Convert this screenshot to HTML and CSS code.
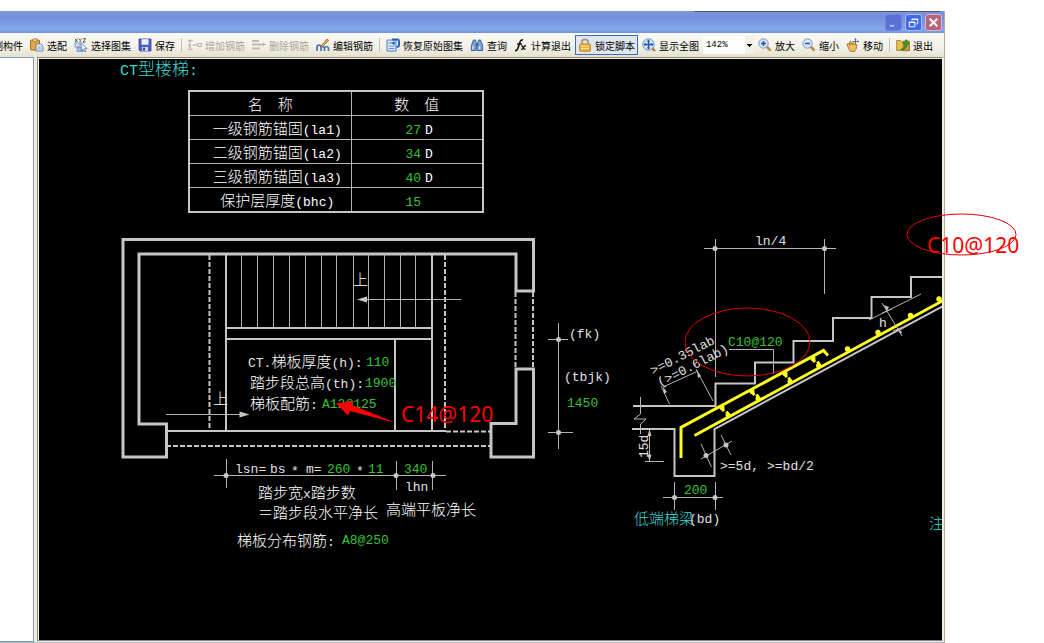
FILE: index.html
```html
<!DOCTYPE html>
<html lang="zh-CN">
<head>
<meta charset="utf-8">
<title>CT型楼梯</title>
<link rel="stylesheet" href="styles.css">
</head>
<body>
<div class="page">
  <div class="window">
    <header class="titlebar">
      <button class="winbtn winbtn-min" type="button" aria-label="最小化"><svg viewBox="0 0 16 16"><path d="M4 11.500h5" stroke="#aabdf5" stroke-width="2"/></svg></button>
      <button class="winbtn winbtn-restore" type="button" aria-label="还原"><svg viewBox="0 0 16 16"><path d="M6.500 6V4.500h6v5H11M6 4.500h7" fill="none" stroke="#fff"/><path d="M3.500 7.500h6v5h-6z M3 8h7" fill="none" stroke="#fff"/></svg></button>
      <button class="winbtn winbtn-close" type="button" aria-label="关闭"><svg viewBox="0 0 16 16"><path d="M4 4l8 8M12 4l-8 8" stroke="#fff" stroke-width="2"/></svg></button>
    </header>

    <nav class="toolbar">
      <button class="tool tool-cut" type="button"><span>制构件</span></button>
      <button class="tool" type="button">
        <svg class="icon" viewBox="0 0 14 14"><rect x=".5" y="2" width="9" height="10" rx="1" fill="#e8a83c" stroke="#a86e1c"/><rect x="3" y=".7" width="4" height="3" rx="1" fill="#e9d9a0" stroke="#7d6a3c" stroke-width=".7"/><path d="M6 6h5l2 2v5H6z" fill="#e9f0fb" stroke="#4a6ea8" stroke-width=".8"/><path d="M7.500 9h4M7.500 11h4" stroke="#6f90c6" stroke-width=".8"/></svg>
        <span>选配</span></button>
      <button class="tool" type="button">
        <svg class="icon" viewBox="0 0 14 14"><path d="M1 .7l2.500 3.500M3.500 .7L1 4.200M5 .7l1.200 1.800L7.500 .7M6.200 2.500v1.700M9 .7h2.500L9 4.200h2.700" stroke="#333" stroke-width=".8" fill="none"/><rect x="1" y="5" width="5" height="4" fill="#cfe0f6" stroke="#5f88bd" stroke-width=".7"/><rect x="3" y="9.500" width="6" height="4" fill="#9dbce6" stroke="#5f88bd" stroke-width=".7"/><path d="M7 4.500l6 6-2.500.2 1.300 2.600-1.300.5-1.300-2.600L7.300 13z" fill="#eaf2fd" stroke="#41689f" stroke-width=".7"/></svg>
        <span>选择图集</span></button>
      <button class="tool" type="button">
        <svg class="icon" viewBox="0 0 14 14"><path d="M1 1h12v12H2l-1-1z" fill="#4c5fc4" stroke="#33429a" stroke-width=".8"/><rect x="3.500" y="1.200" width="7" height="5.500" fill="#eef2ff"/><rect x="4" y="9" width="6" height="4" fill="#cfd6ee"/><rect x="5" y="9.700" width="2" height="3" fill="#33429a"/></svg>
        <span>保存</span></button>
      <i class="sep"></i>
      <button class="tool" type="button" disabled>
        <svg class="icon" viewBox="0 0 14 14"><path d="M0 2.500h5M0 7h3M0 11.500h5M2 2.500v9M5 7h5" fill="none" stroke="#b9b6a8" stroke-width="1.500" stroke-dasharray="2 .7"/><rect x="10" y="5.500" width="3.500" height="3" fill="none" stroke="#b9b6a8"/></svg>
        <span>增加钢筋</span></button>
      <button class="tool" type="button" disabled>
        <svg class="icon" viewBox="0 0 14 14"><path d="M0 3h7M0 6.500h9M0 10.500h7M3 10.500h5" fill="none" stroke="#bfbcae" stroke-width="2"/><path d="M8 6.500h6M11 4.500v4" stroke="#aeab9e"/></svg>
        <span>删除钢筋</span></button>
      <button class="tool" type="button">
        <svg class="icon" viewBox="0 0 14 14"><path d="M1 13V9.500Q1 7 3 7t2 2.500V13M5 10q1.500-3 3.500 0V13M8.500 10q2-3 4 0v3" fill="none" stroke="#3f76b5" stroke-width="1.700"/><path d="M4.500 8.500L11 1l1.800 1.400L6 9z" fill="#e8b054" stroke="#81562a" stroke-width=".7"/></svg>
        <span>编辑钢筋</span></button>
      <i class="sep"></i>
      <button class="tool" type="button">
        <svg class="icon" viewBox="0 0 14 14"><path d="M1 2h9v11H1z" fill="#dce9fb" stroke="#4e7fc4"/><path d="M2.500 5h4M2.500 8h6M2.500 10.500h6" stroke="#5e8ed0"/><path d="M6 1.500h5.500q1.500 0 1.500 2V7q0 2-2.500 2" fill="none" stroke="#2c62b5" stroke-width="2"/><path d="M9 3.500L5 4.500 8.500 7.500z" fill="#2c62b5"/></svg>
        <span>恢复原始图集</span></button>
      <button class="tool" type="button">
        <svg class="icon" viewBox="0 0 14 14"><path d="M3.500 2h2l.8 4v6.500h-5V7.500zM8.500 2h2l2.200 5.500v5h-5V6z" fill="#7fa5d8" stroke="#2c5796" stroke-width=".9"/><path d="M6 6.500h2" stroke="#2c5796" stroke-width="2"/><path d="M2.800 8v3.500M9.300 8v3.500" stroke="#e6f0ff"/></svg>
        <span>查询</span></button>
      <button class="tool" type="button">
        <svg class="icon" viewBox="0 0 14 14"><path d="M1 12.500q2 .5 3-2.500l2-6q.8-2.500 3-2M3 6h5" fill="none" stroke="#1b1b1b" stroke-width="1.700"/><path d="M7 8q1.500-.5 2 1.500t2.500 1.500M12 7.500q-1.500 0-2.500 2t-2.500 2" fill="none" stroke="#1b1b1b" stroke-width="1.300"/></svg>
        <span>计算退出</span></button>
      <button class="tool tool-on" type="button" aria-pressed="true">
        <svg class="icon" viewBox="0 0 14 14"><path d="M4 7V4q0-2.700 3-2.700T10 4v3" fill="none" stroke="#a3967c" stroke-width="1.700"/><rect x="1.500" y="6" width="11" height="7.300" rx="1.500" fill="#f0b13c" stroke="#b5781c" stroke-width=".8"/><path d="M3 8.200h8M3 10.500h8" stroke="#fbe09a"/></svg>
        <span>锁定脚本</span></button>
      <button class="tool" type="button">
        <svg class="icon" viewBox="0 0 14 14"><path d="M9.500 9.500l3.500 3.500" stroke="#b57a3c" stroke-width="2.300"/><circle cx="6.500" cy="6.500" r="5.700" fill="#cfe2f8" stroke="#7593bd"/><path d="M6.500 2.500v8M2.500 6.500h8" stroke="#2452a5" stroke-width="1.300"/><path d="M6.500 1.500l1.700 2H4.800zM6.500 11.500l1.700-2H4.800zM1.500 6.500l2-1.700v3.400zM11.500 6.500l-2-1.700v3.400z" fill="#2452a5"/></svg>
        <span>显示全图</span></button>
      <select class="scale" aria-label="显示比例"><option>142%</option></select>
      <button class="tool" type="button">
        <svg class="icon" viewBox="0 0 14 14"><path d="M8.500 8.500l4 4" stroke="#c08b45" stroke-width="2.500"/><circle cx="5.500" cy="5.500" r="4.700" fill="#d5e6fa" stroke="#7f97bd"/><path d="M5.500 3v5M3 5.500h5" stroke="#2452a5" stroke-width="1.500"/></svg>
        <span>放大</span></button>
      <button class="tool" type="button">
        <svg class="icon" viewBox="0 0 14 14"><path d="M8.500 8.500l4 4" stroke="#c08b45" stroke-width="2.500"/><circle cx="5.500" cy="5.500" r="4.700" fill="#d5e6fa" stroke="#7f97bd"/><path d="M3 5.500h5" stroke="#2452a5" stroke-width="1.500"/></svg>
        <span>缩小</span></button>
      <button class="tool" type="button">
        <svg class="icon" viewBox="0 0 14 14"><path d="M9.500 .5v6M6.500 3.500h6" stroke="#5c6b85"/><path d="M9.500 0l1.300 1.700H8.200zM13.500 3.500l-1.700-1.300v2.600z" fill="#5c6b85"/><path d="M1 6l1.500-.5L4 7.500 3.500 4l1.300-.5L6 6.500l.8-1.800 1.200.4.200 2L10 6l1 .8-1 4.700-1.500 2H4.500L2.500 10.500z" fill="#edbe62" stroke="#94651f" stroke-width=".8"/></svg>
        <span>移动</span></button>
      <i class="sep"></i>
      <button class="tool" type="button">
        <svg class="icon" viewBox="0 0 14 14"><path d="M.7 2.500h4l1 1.500h7.600v8.500H.7z" fill="#eec04c" stroke="#9c7323" stroke-width=".8"/><path d="M7 3h6.300v9.500L7 13z" fill="#d19c34" stroke="#86601a" stroke-width=".6"/><path d="M5 11q4 0 4-5H7l3.300-4.500L13 6h-2q0 5.500-6 6z" fill="#2ea52f" stroke="#176b1c" stroke-width=".6"/></svg>
        <span>退出</span></button>
    </nav>

    <main class="work">
      <aside class="panel"></aside>
      <section class="canvas">
        <svg class="drawing" role="img" aria-label="CT型楼梯平面与剖面">
          <g transform="translate(-39 -59)">
            <text class="title" x="120" y="75"><tspan class="title-latin">CT</tspan>型楼梯<tspan class="title-latin">:</tspan></text>

            <!-- plan: walls -->
            <path class="wall" d="M123 239.500H533.500V291H516V254H139V424H166.500V457H123z"/>
            <path class="wall" d="M516 369H533.500V457H491V423.500H516z"/>
            <path class="dash" d="M515.500 292V368M533 292V368M209.500 255V431M445 255V431M166 446H491M446 431.500H491"/>
            <path class="mid" d="M226 254V431M432 254V431M226 328H432M226 339H432M395 339V431M166 431H446"/>
            <path class="thin" d="M241.500 254V328M257.500 254V328M273.500 254V328M289.500 254V328M305.500 254V328M321.500 254V328M336.500 254V328M353.500 254V328M368.500 254V328M384.500 254V328M400.500 254V328M415.500 254V328"/>
            <path class="thin" d="M461 299.500H360M166 414.500H245"/>
            <path class="solid" d="M357 299.500l10-3v6zM249.500 414.500l-10-3v6z"/>
            <text class="t" x="353" y="285">上</text>
            <text class="t" x="213" y="404">上</text>
            <text class="t" x="248" y="367"><tspan class="m">CT.</tspan>梯板厚度<tspan class="m">(h):</tspan></text>
            <text class="m v" x="366" y="366">110</text>
            <text class="t" x="250" y="388">踏步段总高<tspan class="m">(th):</tspan></text>
            <text class="m v" x="365" y="387">1900</text>
            <text class="t" x="250" y="409">梯板配筋<tspan class="m">:</tspan></text>
            <text class="m v" x="322" y="408">A12@125</text>

            <!-- plan: dimensions -->
            <path class="thin" d="M214 475.500H446M226.500 459V488M396.500 461V490M432.500 461V490M558.500 323V449M548 339.500H568M548 432.500H573"/>
            <g class="solid"><circle cx="226" cy="475.500" r="2.500"/><circle cx="396" cy="475.500" r="2.500"/><circle cx="433" cy="475.500" r="2.500"/><circle cx="558.500" cy="339.500" r="2.500"/><circle cx="558.500" cy="432.500" r="2.500"/></g>
            <text class="m" x="235" y="473">lsn=</text><text class="m" x="270" y="473">bs</text><text class="m" x="291" y="475">*</text><text class="m" x="306" y="473">m=</text>
            <text class="m v" x="327" y="473">260</text><text class="m" x="356" y="475">*</text><text class="m v" x="368" y="473">11</text>
            <text class="m v" x="404" y="473">340</text><text class="m" x="405" y="491">lhn</text>
            <text class="t" x="258" y="498">踏步宽<tspan class="m">x</tspan>踏步数</text>
            <text class="t" x="258" y="518">＝踏步段水平净长</text>
            <text class="t" x="386" y="515">高端平板净长</text>
            <text class="t" x="237" y="546">梯板分布钢筋<tspan class="m">:</tspan></text>
            <text class="m v" x="342" y="544">A8@250</text>
            <text class="m" x="569" y="338">(fk)</text>
            <text class="m" x="564" y="381">(tbjk)</text>
            <text class="m v" x="567" y="407">1450</text>

            <!-- section: concrete outline -->
            <path class="mid" d="M633 406H715.500V383.500H755V362.500H793.500V341H833V318H871.500V297H911V277H944"/>
            <path class="mid" d="M632 429H674.500V476H714.500V429L944 305.500"/>
            <path class="thin" d="M640.500 397V414L634 419H646L640.500 424V434"/>
            <path class="thin" d="M645 461.500H664M655 429.500H664M649.500 430V461"/>
            <path class="solid" d="M649.500 429l-2 7h4zM649.500 461.500l-2-7h4z"/>
            <text class="m" transform="translate(648 458) rotate(-90)">15d</text>

            <!-- section: bars -->
            <path class="bar" d="M681 458V427.500L823.500 350.500L828 355.500M694.500 435.500L944 300"/>
            <path class="bar" d="M719.500 406l4.500 5M750 390l4.500 5M782.500 372l4.500 5M810.500 357l4.500 5M730 417l-3.500-5.500M760 400l-3.500-5.500M792 383l-3.500-5.500M821 367l-3.500-5.500"/>
            <g class="dots"><circle cx="722" cy="407.500" r="2.500"/><circle cx="752" cy="391.500" r="2.500"/><circle cx="785" cy="373.500" r="2.500"/><circle cx="813" cy="358.500" r="2.500"/><circle cx="728" cy="415" r="2.500"/><circle cx="758" cy="398.500" r="2.500"/><circle cx="790" cy="381.500" r="2.500"/><circle cx="818.500" cy="365.500" r="2.500"/><circle cx="847.500" cy="349" r="2.700"/><circle cx="878" cy="332.500" r="2.700"/><circle cx="910.500" cy="315.500" r="2.700"/><circle cx="939" cy="299" r="2.700"/></g>

            <!-- section: dimensions -->
            <path class="thin" d="M704 248.500H836M715.500 239V377M824.500 239V294M729 349.500H773.500V374"/>
            <path class="thin" d="M663 387L698 371M661 386L669.500 404M696 369L713 401"/>
            <path class="thin" d="M869 320L921 294M882 303L902 336M882 313l10-4M893 331l10-4"/>
            <path class="thin" d="M701 459L732 441M701 444L711.500 467M721 435L731 455M663 497.500H723M674.500 482V510M715.500 482V510"/>
            <path class="solid" d="M663 387l1 7 3-2zM697 371l1 7 3-2zM887 311l-3-6 5 2zM897 328l5 4-1 2z"/>
            <g class="solid"><circle cx="715" cy="248.500" r="2.500"/><circle cx="824.500" cy="248.500" r="2.500"/><circle cx="706" cy="455.500" r="2.500"/><circle cx="726" cy="445" r="2.500"/><circle cx="674.500" cy="497.500" r="2.500"/><circle cx="715" cy="497.500" r="2.500"/></g>
            <text class="m" x="755" y="245">ln/4</text>
            <text class="m v" x="728" y="346">C10@120</text>
            <text class="m" transform="translate(653 375) rotate(-27)">&gt;=0.35lab</text>
            <text class="m" transform="translate(660 387) rotate(-27)">(&gt;=0.6lab)</text>
            <text class="m" x="879" y="327">h</text>
            <text class="m" x="720" y="470">&gt;=5d,</text><text class="m" x="767" y="470">&gt;=bd/2</text>
            <text class="m v" x="684" y="494">200</text>
            <text class="t note" x="634" y="524">低端梯梁</text><text class="m" x="689" y="523">(bd)</text>
            <text class="t note" x="929" y="529">注</text>
          </g>
        </svg>

        <table class="params">
          <thead><tr><th>名　称</th><th>数　值</th></tr></thead>
          <tbody>
            <tr><td>一级钢筋锚固<span class="m">(la1)</span></td><td><span class="m v">27</span><span class="m unit">D</span></td></tr>
            <tr><td>二级钢筋锚固<span class="m">(la2)</span></td><td><span class="m v">34</span><span class="m unit">D</span></td></tr>
            <tr><td>三级钢筋锚固<span class="m">(la3)</span></td><td><span class="m v">40</span><span class="m unit">D</span></td></tr>
            <tr><td>保护层厚度<span class="m">(bhc)</span></td><td><span class="m v">15</span></td></tr>
          </tbody>
        </table>
      </section>
    </main>
  </div>

  <svg class="markup" aria-label="批注">
    <ellipse cx="747.500" cy="342" rx="62.500" ry="34"/>
    <ellipse cx="961.500" cy="234.500" rx="54.500" ry="20.500"/>
    <path d="M336 403.500L353 401L352 405L396 423L350 411L348 415.500z"/>
    <text x="401" y="422">C14@120</text>
    <text x="927" y="253">C10@120</text>
  </svg>
</div>
</body>
</html>
```

FILE: styles.css
```css
* { box-sizing: border-box; }
body { margin: 0; background: #fff; font-family: "Liberation Sans", "Noto Sans CJK SC", sans-serif; }
.page { position: relative; height: 100vh; padding: 11px 99px 0 0; overflow: hidden; }
.window { display: flex; flex-direction: column; height: 100%; background: #efecdf; border-right: 1px solid #b5aa9c; }

.titlebar { display: flex; justify-content: flex-end; align-items: center; gap: 3px; height: 22px; padding-right: 2px; background: linear-gradient(#4c5670, #4c5670) no-repeat right 4px top / 246px 1px, linear-gradient(#7d94dc, #7490dc 30%, #86a8ec 85%, #7390dc); }
.winbtn { width: 17px; height: 17px; padding: 0; border: 1px solid #93a8ea; border-radius: 3px; line-height: 0; }
.winbtn svg { width: 15px; height: 15px; }
.winbtn-min { background: #5a70d4; border-color: #7086dc; }
.winbtn-restore { background: #3f6be4; border-color: #a9bcf4; }
.winbtn-close { background: #b5667c; border-color: #d8b4cc; }

.toolbar { display: flex; align-items: center; gap: 1px; height: 24px; padding-right: 8px; background: linear-gradient(#fafaf6, #f3f1e7 60%, #e6e2d0); }
.tool { display: flex; align-items: center; gap: 3px; flex: none; height: 20px; padding: 0 3px; border: 0; background: none; color: #000; font: 10px "Noto Sans CJK SC", sans-serif; white-space: nowrap; }
.tool:disabled { color: #aaa798; }
.tool-cut { margin-left: -10px; }
.tool-on { background: #dfe6f0; box-shadow: inset 0 0 0 1px #3f6cb0; }
.icon { width: 14px; height: 14px; flex: none; }
.sep { width: 1px; height: 14px; margin: 0 2px; background: #c5c2b4; }
.scale { width: 52px; height: 18px; margin: 0; padding: 0 3px; border: 0; appearance: none; color: #000; font: 9px "Liberation Mono", monospace; background-color: #fff; background-image: linear-gradient(#000, #000), linear-gradient(#000, #000), linear-gradient(#000, #000), linear-gradient(#f3f1e7, #f3f1e7); background-repeat: no-repeat; background-position: right 2px top 8px, right 3px top 9px, right 4px top 10px, right top; background-size: 5px 1px, 3px 1px, 1px 1px, 9px 100%; }

.work { display: flex; flex: 1; min-height: 0; border-bottom: 1px solid #a9b8cc; }
.panel { width: 34px; background: #fff; border: 1px solid #7f9db9; border-left: 0; }
.canvas { position: relative; flex: 1; margin: 0 1px 1px 3px; border: 1px solid #8a8778; border-right-color: #f4f1e6; box-shadow: inset 1px 1px #f4f1e6; background: #000; overflow: hidden; }
.drawing { position: absolute; left: 1px; top: 1px; width: 100%; height: 100%; }

.t { font: 300 15px "Noto Sans CJK SC", sans-serif; fill: #fff; }
.m { font: 13px "Liberation Mono", monospace; fill: #e0e0e0; }
.v { color: #35c035; fill: #35c035; }
.title { font: 300 17px "Noto Sans CJK SC", sans-serif; fill: #3cd8d4; }
.title-latin { font: 15px "Liberation Mono", monospace; }
.note { fill: #3cd8d4; }

.wall, .mid, .thin, .dash, .bar { fill: none; stroke: #c6c6c6; }
.wall { stroke-width: 3; }
.mid { stroke-width: 2; }
.thin { stroke-width: 1; stroke: #b4b4b4; }
.dash { stroke-width: 2; stroke-dasharray: 5 2; }
.bar { stroke: #ffff1e; stroke-width: 3; }
.dots { fill: #ffff1e; }
.solid { fill: #c6c6c6; }

.params { position: absolute; left: 150px; top: 32px; border-collapse: collapse; border: 2px solid #c6c6c6; color: #fff; font: 300 15px/23px "Noto Sans CJK SC", sans-serif; }
.params th, .params td { height: 24px; padding: 0; border: 1px solid #b4b4b4; font-weight: 300; line-height: 23px; }
.params th:first-child { width: 162px; }
.params th:last-child { width: 132px; }
.params td { text-align: center; padding-left: 14px; }
.params td:last-child { padding-left: 54px; text-align: left; }
.unit { margin-left: 4px; }

.markup { position: absolute; left: 0; top: 0; width: 100%; height: 100%; pointer-events: none; font: 21px "Noto Sans", sans-serif; fill: #f00; }
.markup ellipse { fill: none; stroke: #e00000; stroke-width: 1; }
```
